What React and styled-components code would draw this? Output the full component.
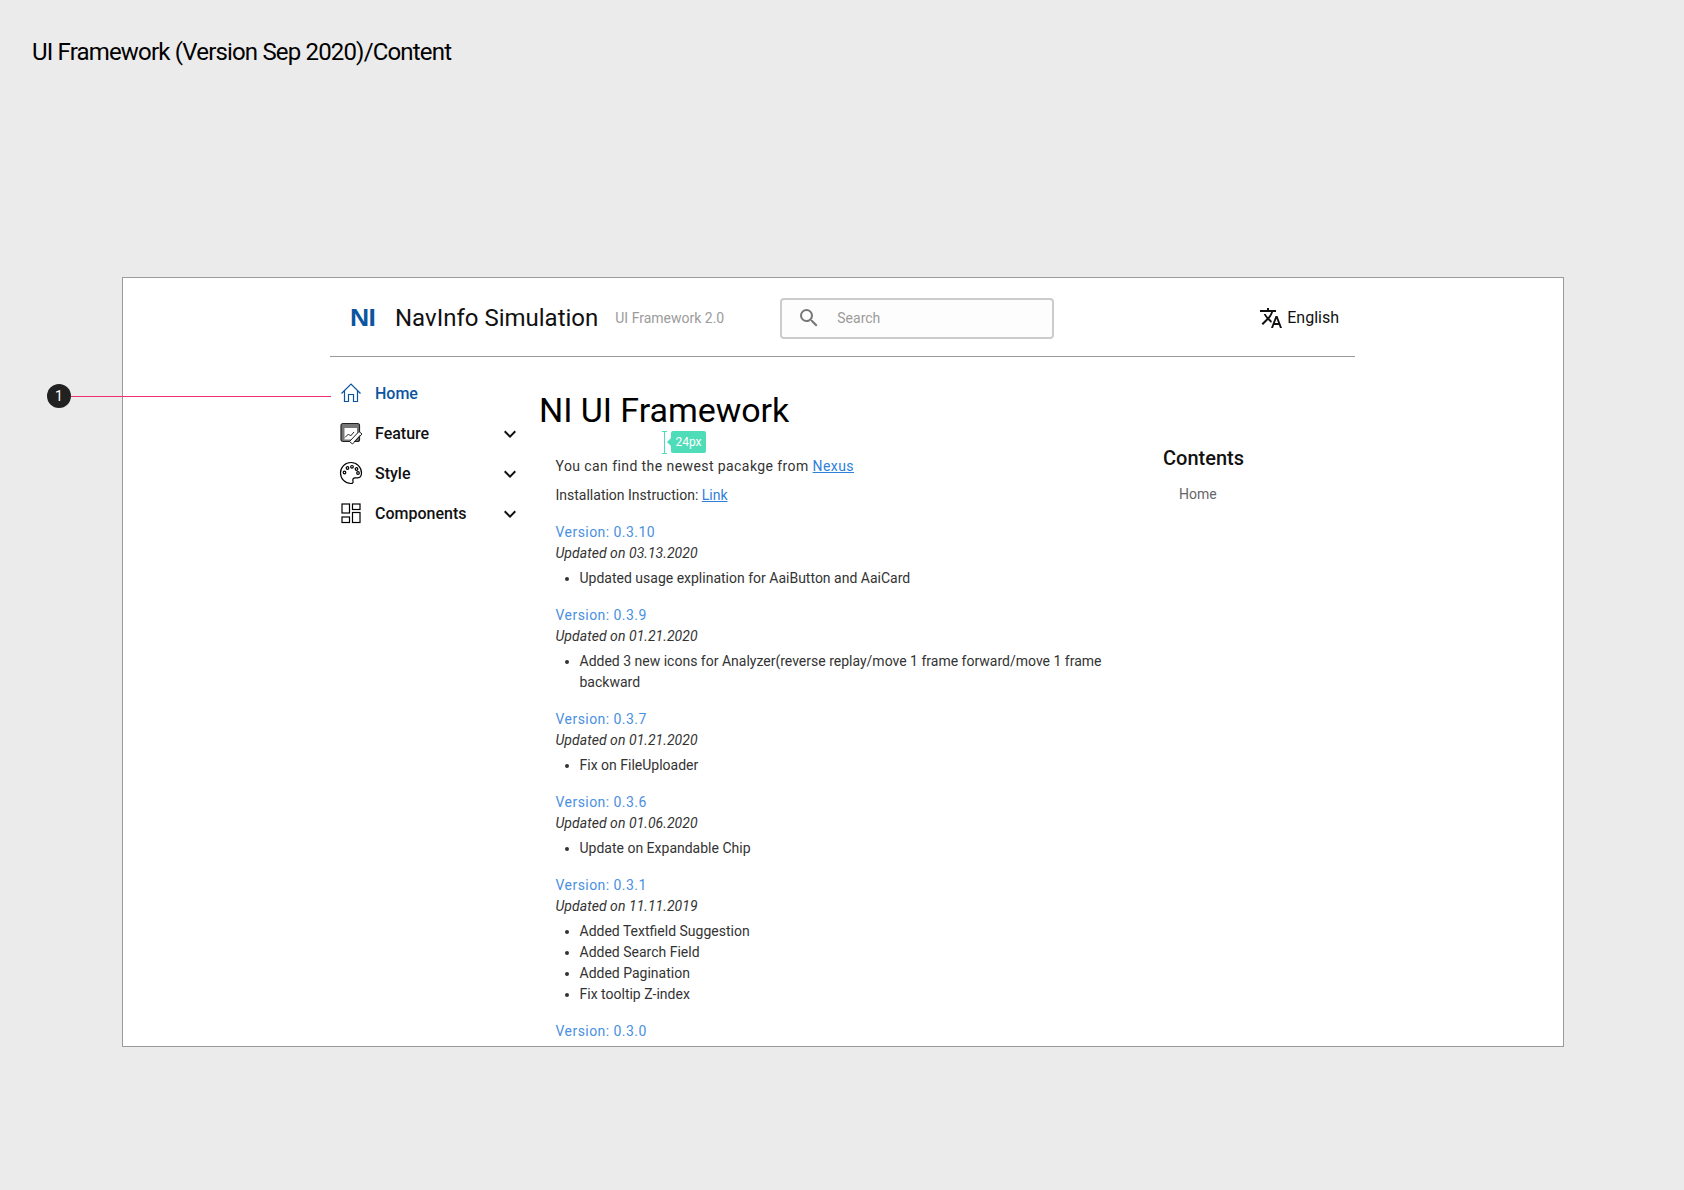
import React from 'react'
import styled, { createGlobalStyle } from 'styled-components'
import { MdExpandMore, MdSearch, MdTranslate } from 'react-icons/md'

const versions = [
  { name: 'Version: 0.3.10', date: 'Updated on 03.13.2020', notes: ['Updated usage explination for AaiButton and AaiCard'] },
  { name: 'Version: 0.3.9', date: 'Updated on 01.21.2020', notes: ['Added 3 new icons for Analyzer(reverse replay/move 1 frame forward/move 1 frame backward'] },
  { name: 'Version: 0.3.7', date: 'Updated on 01.21.2020', notes: ['Fix on FileUploader'] },
  { name: 'Version: 0.3.6', date: 'Updated on 01.06.2020', notes: ['Update on Expandable Chip'] },
  { name: 'Version: 0.3.1', date: 'Updated on 11.11.2019', notes: ['Added Textfield Suggestion', 'Added Search Field', 'Added Pagination', 'Fix tooltip Z-index'] },
  { name: 'Version: 0.3.0' },
]

const HomeIcon = () => (
  <svg width="22" height="22" viewBox="0 0 22 22" fill="none" stroke="#0b55a0" strokeWidth="1.2">
    <path d="M1.5 11.5 L11 2 L20.5 11.5 M4.5 9 V19.5 H8.5 V12.5 H13.5 V19.5 H17.5 V9" />
  </svg>
)

const FeatureIcon = () => (
  <svg width="24" height="24" viewBox="0 0 24 24" fill="none">
    <rect x="2" y="2.5" width="18.5" height="18" rx="2" fill="#777" stroke="#222" strokeWidth="1.2" />
    <rect x="5.5" y="7" width="12.5" height="11.5" fill="#fff" />
    <path d="M6 16.5 L9.5 13 L11.5 15 L15 11" stroke="#222" strokeWidth="1" />
    <path d="M10.5 20.5 L20 10.5 L23 13 L13.5 23 Z M15 21 L21.5 14" fill="#fff" stroke="#222" strokeWidth="1" />
  </svg>
)

const StyleIcon = () => (
  <svg width="24" height="24" viewBox="0 0 24 24" fill="none" stroke="#000" strokeWidth="1.2">
    <path d="M12 1.5 C6 1.5 1.5 6.2 1.5 12 C1.5 17.8 6.2 22.5 12 22.5 C13.6 22.5 14.4 21.4 14 20.2 C13.4 18.6 14.2 16.8 16.2 16.8 H18.5 C21 16.8 22.5 15 22.5 12 C22.5 6.2 17.8 1.5 12 1.5 Z" />
    <circle cx="5.5" cy="11.5" r="1.3" />
    <circle cx="8.5" cy="7" r="1.3" />
    <circle cx="13" cy="5.8" r="1.3" />
    <circle cx="17.5" cy="8" r="1.3" />
    <circle cx="19" cy="12" r="1.3" />
  </svg>
)

const ComponentsIcon = () => (
  <svg width="22" height="22" viewBox="0 0 22 22" fill="none" stroke="#000" strokeWidth="1.2">
    <rect x="2" y="2" width="7.5" height="9" />
    <rect x="12.5" y="2" width="7.5" height="5.5" />
    <rect x="2" y="15" width="7.5" height="5.5" />
    <rect x="12.5" y="10.5" width="7.5" height="10" />
  </svg>
)

const navItems = [
  { label: 'Home', Icon: HomeIcon, active: true },
  { label: 'Feature', Icon: FeatureIcon, more: true },
  { label: 'Style', Icon: StyleIcon, more: true },
  { label: 'Components', Icon: ComponentsIcon, more: true },
]

function App() {
  return (
    <Page>
      <GlobalStyle />
      <PageTitle>UI Framework (Version Sep 2020)/Content</PageTitle>
      <Frame>
        <Inner>
          <Header>
            <Logo>NI</Logo>
            <Brand>NavInfo Simulation</Brand>
            <Tagline>UI Framework 2.0</Tagline>
            <SearchBox>
              <MdSearch size={24} color="#777" />
              <span>Search</span>
            </SearchBox>
            <Language>
              <MdTranslate size={24} color="#111" />
              English
            </Language>
          </Header>
          <Body>
            <Sidebar>
              {navItems.map(({ label, Icon, active, more }) => (
                <NavItem key={label} $active={active}>
                  <NavIcon><Icon /></NavIcon>
                  <NavLabel>{label}</NavLabel>
                  {more && <Chevron size={24} color="#111" />}
                </NavItem>
              ))}
            </Sidebar>
            <Main>
              <Heading>NI UI Framework</Heading>
              <Measure><MeasureBadge>24px</MeasureBadge></Measure>
              <Intro>
                <IntroLine $spaced>You can find the newest pacakge from <a href="#">Nexus</a></IntroLine>
                <IntroLine>Installation Instruction: <a href="#">Link</a></IntroLine>
              </Intro>
              {versions.map(v => (
                <Version key={v.name}>
                  <VersionName>{v.name}</VersionName>
                  {v.date && <VersionDate>{v.date}</VersionDate>}
                  {v.notes && (
                    <Notes>
                      {v.notes.map(n => <li key={n}>{n}</li>)}
                    </Notes>
                  )}
                </Version>
              ))}
            </Main>
            <Toc>
              <TocTitle>Contents</TocTitle>
              <TocLink>Home</TocLink>
            </Toc>
          </Body>
        </Inner>
        <Callout>
          <CalloutDot>1</CalloutDot>
          <CalloutLine />
        </Callout>
      </Frame>
    </Page>
  )
}

export default App

const GlobalStyle = createGlobalStyle`
  html, body {
    margin: 0;
    background: #ebebeb;
  }
  * {
    box-sizing: border-box;
  }
`

const Page = styled.div`
  width: 1684px;
  height: 1190px;
  padding: 37px 0 0 32px;
  background: #ebebeb;
  font-family: Roboto, "Liberation Sans", sans-serif;
  overflow: hidden;
`

const PageTitle = styled.div`
  font-size: 24px;
  line-height: 30px;
  letter-spacing: -0.83px;
  color: #000;
`

const Frame = styled.div`
  position: relative;
  width: 1442px;
  height: 770px;
  margin: 210px 0 0 90px;
  background: #fff;
  border: 1px solid #9a9a9a;
`

const Inner = styled.div`
  height: 100%;
  width: 1025px;
  margin-left: 207px;
  overflow: hidden;
`

const Header = styled.div`
  display: flex;
  align-items: center;
  height: 79px;
  padding: 2px 16px 0 0;
  border-bottom: 1px solid #999;
`

const Logo = styled.div`
  width: 26px;
  margin-left: 20px;
  font-family: "Liberation Sans", sans-serif;
  font-size: 23px;
  font-weight: 700;
  line-height: 1;
  letter-spacing: -0.5px;
  color: #0b55a0;
  transform: scaleX(1.15);
  transform-origin: left center;
`

const Brand = styled.div`
  margin-left: 19px;
  font-size: 24px;
  color: #111;
`

const Tagline = styled.div`
  margin-left: 17px;
  width: 165px;
  font-size: 14px;
  color: #9b9b9b;
`

const SearchBox = styled.div`
  display: flex;
  align-items: center;
  gap: 16px;
  width: 274px;
  height: 41px;
  padding-left: 15px;
  background: #fdfdfd;
  border: 2px solid #ccc;
  border-radius: 4px;
  font-size: 14px;
  color: #9b9b9b;
`

const Language = styled.div`
  display: flex;
  align-items: center;
  gap: 4px;
  margin: -1px 0 0 auto;
  font-size: 16px;
  color: #111;
`

const Body = styled.div`
  display: flex;
`

const Sidebar = styled.nav`
  width: 209px;
  flex-shrink: 0;
  padding-top: 16px;
`

const NavItem = styled.div`
  display: flex;
  align-items: center;
  width: 192px;
  height: 40px;
  padding-left: 9px;
  font-size: 16px;
  font-weight: 500;
  color: ${props => props.$active ? '#0b55a0' : '#111'};
`

const NavIcon = styled.div`
  display: flex;
  align-items: center;
  justify-content: center;
  width: 24px;
  height: 24px;
  margin-right: 12px;
`

const NavLabel = styled.div`
  flex: 1;
`

const Chevron = styled(MdExpandMore)`
  margin-top: 2px;
`

const Main = styled.div`
  width: 576px;
  flex-shrink: 0;
  position: relative;
`

const Heading = styled.h1`
  margin: 31px 0 0;
  font-size: 34px;
  font-weight: 400;
  line-height: 44px;
  letter-spacing: -0.05px;
  color: #000;
`

const Measure = styled.div`
  position: absolute;
  left: 123px;
  top: 74px;
  width: 5px;
  height: 23px;
  border-top: 1px solid #4fdcb8;
  border-bottom: 1px solid #4fdcb8;
  background: linear-gradient(#4fdcb8, #4fdcb8) center / 1px 100% no-repeat;
`

const MeasureBadge = styled.div`
  position: absolute;
  left: 9px;
  top: -1px;
  width: 35px;
  height: 22px;
  border-radius: 2px;
  background: #4fdcb8;
  font-size: 12px;
  line-height: 22px;
  text-align: center;
  color: #fff;

  &::before {
    content: '';
    position: absolute;
    left: -4px;
    top: 7px;
    border-top: 4px solid transparent;
    border-bottom: 4px solid transparent;
    border-right: 4px solid #4fdcb8;
  }
`

const Intro = styled.div`
  margin: 24px 0 0 16.5px;
`

const IntroLine = styled.div`
  margin-bottom: 8px;
  font-size: 14px;
  line-height: 21px;
  letter-spacing: ${props => props.$spaced ? '0.42px' : '0'};
  color: #333;

  a {
    color: #2f7fdc;
  }
`

const Version = styled.div`
  margin: 16px 0 0 16.5px;
`

const VersionName = styled.div`
  font-size: 14px;
  line-height: 21px;
  letter-spacing: 0.45px;
  color: #4a90e2;
`

const VersionDate = styled.div`
  font-size: 14px;
  font-style: italic;
  line-height: 21px;
  letter-spacing: 0.05px;
  color: #333;
`

const Notes = styled.ul`
  margin: 4px 0 0;
  padding-left: 24px;
  font-size: 14px;
  line-height: 21px;
  color: #333;
`

const Toc = styled.div`
  padding: 86px 0 0 48px;
`

const TocTitle = styled.div`
  font-size: 20px;
  font-weight: 500;
  line-height: 30px;
  color: #111;
`

const TocLink = styled.div`
  margin: 11px 0 0 16px;
  font-size: 14px;
  line-height: 21px;
  color: #666;
`

const Callout = styled.div`
  position: absolute;
  left: -76px;
  top: 106px;
  display: flex;
  align-items: center;
`

const CalloutDot = styled.div`
  width: 24px;
  height: 24px;
  border-radius: 50%;
  background: #212121;
  font-size: 14px;
  line-height: 24px;
  text-align: center;
  color: #fff;
`

const CalloutLine = styled.div`
  width: 260px;
  height: 1px;
  background: #ee2f72;
`
